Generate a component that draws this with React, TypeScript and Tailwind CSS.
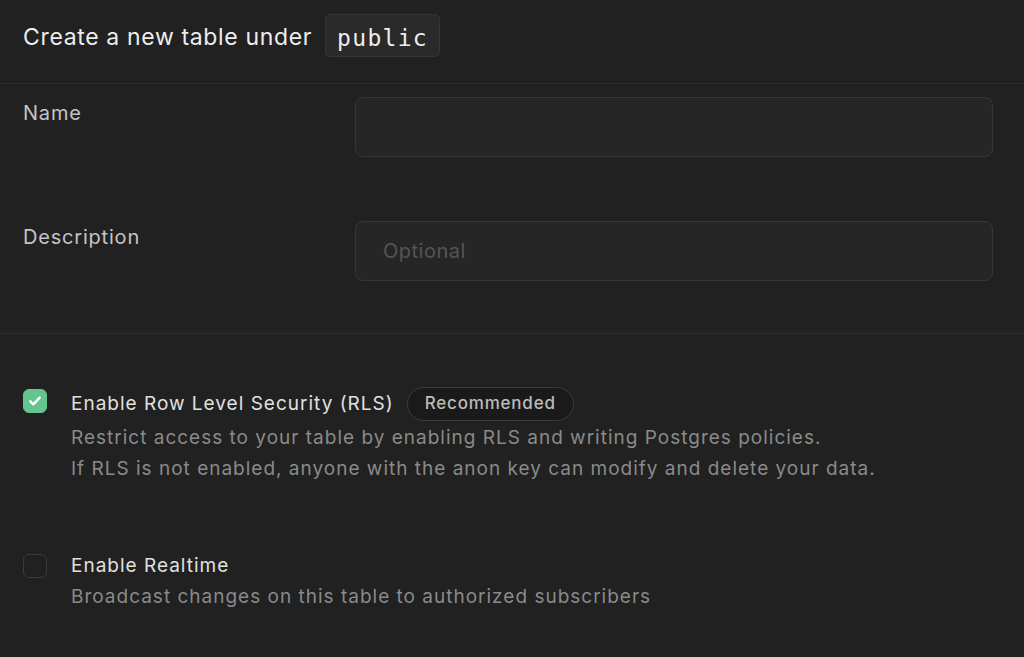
import { useState } from "react";

function Check({ on, onClick }: { on: boolean; onClick: () => void }) {
  return (
    <button
      type="button"
      onClick={onClick}
      className={
        "mt-[2px] flex h-6 w-6 shrink-0 items-center justify-center rounded-[6px] border " +
        (on ? "border-[#65c58f] bg-[#65c58f]" : "border-[#3a3a3a] bg-transparent")
      }
    >
      {on && (
        <svg width="16" height="16" viewBox="0 0 24 24" fill="none" stroke="#fff" strokeWidth="3.6" strokeLinecap="round" strokeLinejoin="round">
          <path d="M5 12.5l4.5 4.5L19 7" />
        </svg>
      )}
    </button>
  );
}

export default function App() {
  const [rls, setRls] = useState(true);
  const [rt, setRt] = useState(false);

  return (
    <div className="min-h-[657px] w-full bg-[#212121] font-['Inter',sans-serif] text-[#e4e4e4]">
      <div className="flex h-[84px] items-start gap-[13px] border-b border-[#2c2c2c] px-[23px] pt-[14px]">
        <h1 className="text-[23px] leading-[47px] tracking-[0.65px] text-[#ededed]">Create a new table under</h1>
        <span className="h-[43px] rounded-[5px] border border-[#353535] bg-[#2a2a2a] px-[11px] font-['DejaVu_Sans_Mono',monospace] text-[23px] leading-[47px] tracking-[1.3px] text-[#ededed]">
          public
        </span>
      </div>

      <div className="border-b border-[#2e2e2e] pb-[52px] pt-[13px]">
        <div className="grid grid-cols-[332px_1fr] px-[23px] pr-[31px]">
          <label className="pt-[1px] text-[20px] tracking-[0.8px] text-[#c4c4c4]">Name</label>
          <input className="h-[60px] w-full rounded-[8px] border border-[#363636] bg-[#262626] px-[27px] text-[20px] text-[#ededed] outline-none" />
        </div>
        <div className="mt-[64px] grid grid-cols-[332px_1fr] px-[23px] pr-[31px]">
          <label className="pt-[1px] text-[20px] tracking-[0.8px] text-[#c4c4c4]">Description</label>
          <input
            placeholder="Optional"
            className="h-[60px] w-full rounded-[8px] border border-[#363636] bg-[#262626] px-[27px] text-[20px] tracking-[0.5px] text-[#ededed] outline-none placeholder:text-[#555555]"
          />
        </div>
      </div>

      <div className="px-[23px] pt-[53px]">
        <div className="flex gap-6">
          <Check on={rls} onClick={() => setRls(!rls)} />
          <div>
            <div className="flex items-center gap-[13px]">
              <span className="text-[19px] tracking-[1px] text-[#e0e0e0]">Enable Row Level Security (RLS)</span>
              <span className="rounded-full border border-[#3a3a3a] bg-[#1a1a1a] px-[17px] py-[3px] text-[17px] font-medium tracking-[0.8px] text-[#bcbcbc]">
                Recommended
              </span>
            </div>
            <p className="mt-[1px] text-[19px] leading-[31px] tracking-[1px] text-[#8a8a8a]">
              Restrict access to your table by enabling RLS and writing Postgres policies.
              <br />
              If RLS is not enabled, anyone with the anon key can modify and delete your data.
            </p>
          </div>
        </div>

        <div className="mt-[68px] flex gap-6">
          <Check on={rt} onClick={() => setRt(!rt)} />
          <div>
            <span className="text-[19px] tracking-[1px] text-[#e0e0e0]">Enable Realtime</span>
            <p className="mt-[1px] text-[19px] leading-[31px] tracking-[1px] text-[#8a8a8a]">
              Broadcast changes on this table to authorized subscribers
            </p>
          </div>
        </div>
      </div>
    </div>
  );
}
